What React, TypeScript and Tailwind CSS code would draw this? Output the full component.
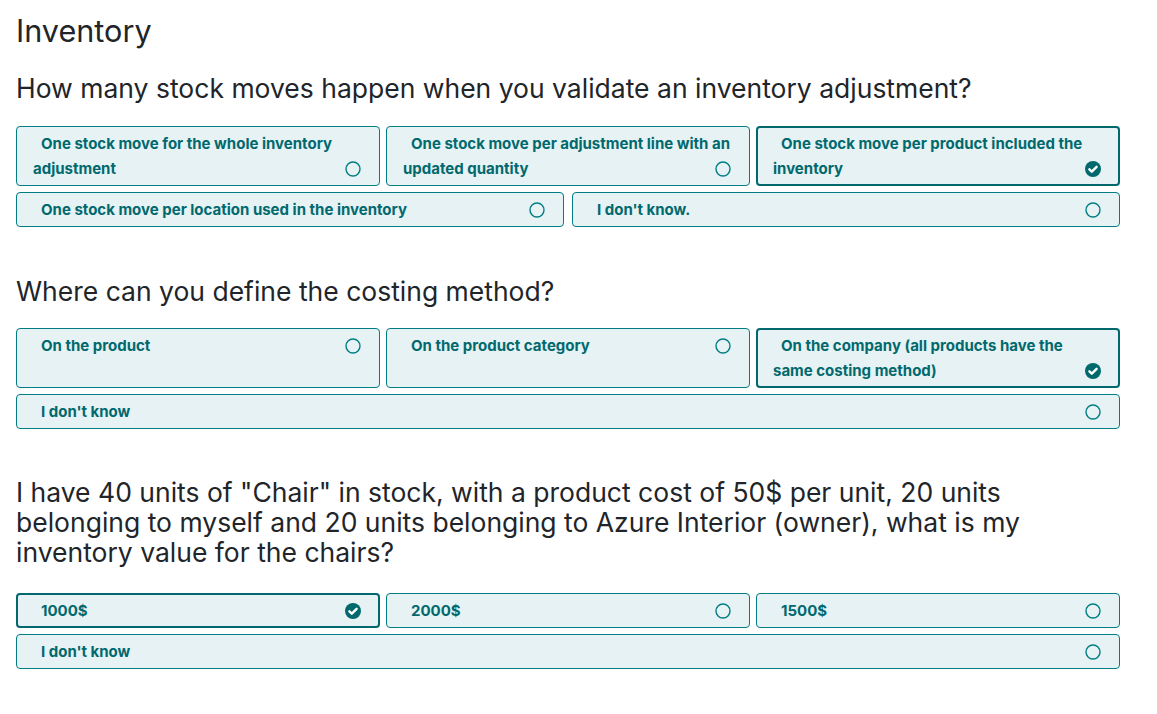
type Choice = { label: string; checked?: boolean };

const RadioIcon = ({ checked }: { checked?: boolean }) =>
  checked ? (
    <svg width="16" height="16" viewBox="0 0 16 16">
      <circle cx="8" cy="8" r="8" fill="#01696e" />
      <path d="M4.4 8.3l2.4 2.4 4.8-4.9" fill="none" stroke="#fff" strokeWidth="2.4" strokeLinecap="round" strokeLinejoin="round" />
    </svg>
  ) : (
    <svg width="16" height="16" viewBox="0 0 16 16">
      <circle cx="8" cy="8" r="7" fill="none" stroke="#017e84" strokeWidth="1.4" />
    </svg>
  );

const ChoiceBox = ({ label, checked }: Choice) => (
  <label
    className={`block rounded-[4px] bg-[#e6f2f3] text-[#01696e] ${
      checked ? "border-2 border-[#01696e] pl-[15px] pr-[15px] py-[3px]" : "border border-[#017e84] pl-4 pr-4 py-1"
    }`}
  >
    <div className="relative">
      <span className="block text-[15px] font-bold leading-[25px] indent-2">{label}</span>
      <span className="absolute bottom-0 right-[2px] flex h-[25px] items-center">
        <RadioIcon checked={checked} />
      </span>
    </div>
  </label>
);

const Question = ({
  title,
  rows,
  className,
  optionsTop,
}: {
  title: string;
  rows: Choice[][];
  className: string;
  optionsTop: string;
}) => (
  <section className={className}>
    <h2 className="text-[26.5px] leading-[30px] text-[#212529]">{title}</h2>
    <div className={`flex flex-col gap-1.5 ${optionsTop}`}>
      {rows.map((row, i) => (
        <div
          key={i}
          className={`grid ${
            row.length === 3 ? "grid-cols-3 gap-1.5" : row.length === 2 ? "grid-cols-2 gap-2" : "grid-cols-1"
          }`}
        >
          {row.map((c) => (
            <ChoiceBox key={c.label} {...c} />
          ))}
        </div>
      ))}
    </div>
  </section>
);

export default function App() {
  return (
    <div className="min-h-screen bg-white pl-4 pt-[14px]" style={{ fontFamily: "Inter, 'Noto Sans', sans-serif" }}>
      <div className="w-[1104px]">
        <h1 className="text-[30.6px] leading-[34px] text-[#212529]">Inventory</h1>

        <Question
          className="mt-[25px]"
          optionsTop="mt-[23px]"
          title="How many stock moves happen when you validate an inventory adjustment?"
          rows={[
            [
              { label: "One stock move for the whole inventory adjustment" },
              { label: "One stock move per adjustment line with an updated quantity" },
              { label: "One stock move per product included the inventory", checked: true },
            ],
            [{ label: "One stock move per location used in the inventory" }, { label: "I don't know." }],
          ]}
        />

        <Question
          className="mt-[49px]"
          optionsTop="mt-[22px]"
          title="Where can you define the costing method?"
          rows={[
            [
              { label: "On the product" },
              { label: "On the product category" },
              { label: "On the company (all products have the same costing method)", checked: true },
            ],
            [{ label: "I don't know" }],
          ]}
        />

        <Question
          className="mt-[48px]"
          optionsTop="mt-[26px]"
          title={'I have 40 units of "Chair" in stock, with a product cost of 50$ per unit, 20 units belonging to myself and 20 units belonging to Azure Interior (owner), what is my inventory value for the chairs?'}
          rows={[
            [{ label: "1000$", checked: true }, { label: "2000$" }, { label: "1500$" }],
            [{ label: "I don't know" }],
          ]}
        />
      </div>
    </div>
  );
}
